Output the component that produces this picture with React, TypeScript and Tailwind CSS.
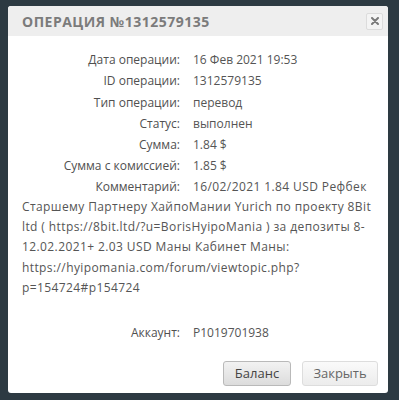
import React from "react";

const rows: [string, string][] = [
  ["Дата операции:", "16 Фев 2021 19:53"],
  ["ID операции:", "1312579135"],
  ["Тип операции:", "перевод"],
  ["Статус:", "выполнен"],
  ["Сумма:", "1.84 $"],
  ["Сумма с комиссией:", "1.85 $"],
];

function Row({
  label,
  children,
  valueClass = "",
  lh = "leading-[21.3px]",
}: {
  label: string;
  children: React.ReactNode;
  valueClass?: string;
  lh?: string;
}) {
  return (
    <div className={lh}>
      <span className="inline-block w-[158px] text-right mr-[13px] text-[#505050]">{label}</span>
      <span className={"text-[#555] " + valueClass}>{children}</span>
    </div>
  );
}

export default function App() {
  return (
    <div
      className="w-[399px] h-[400px] bg-[#2d3a42] pt-[6px] pl-[8px] overflow-hidden"
      style={{ fontFamily: '"Open Sans", "Noto Sans", sans-serif' }}
    >
      <div className="w-[380px] h-[387px] bg-white rounded-[3px] flex flex-col overflow-hidden">
        <div className="h-[30px] bg-[#eeeeee] flex items-center justify-between pl-[14px] pr-[5px]">
          <div className="text-[14px] font-bold tracking-[0.5px] text-[#7b7b7b]">ОПЕРАЦИЯ №1312579135</div>
          <div className="w-[17px] h-[17px] border border-[#dcdcdc] rounded-[2px] bg-[#f4f4f4] flex items-center justify-center">
            <svg width="8" height="8" viewBox="0 0 8 8">
              <path d="M1 1 L7 7 M7 1 L1 7" stroke="#7a7a7a" strokeWidth="2" strokeLinecap="round" />
            </svg>
          </div>
        </div>
        <div className="pl-[14px] pr-[10px] pt-[13px] text-[12px]">
          {rows.map(([l, v]) => (
            <Row key={l} label={l}>
              {v}
            </Row>
          ))}
          <Row label="Комментарий:" valueClass="tracking-[0.4px]" lh="leading-[20.2px]">
            16/02/2021 1.84 USD Рефбек Старшему Партнеру ХайпоМании Yurich по проекту 8Bit ltd ( https://8bit.ltd/?u=BorisHyipoMania ) за депозиты 8-12.02.2021+ 2.03 USD Маны Кабинет Маны: https://hyipomania.com/forum/viewtopic.php?p=154724#p154724
          </Row>
          <div className="mt-[24px]">
            <Row label="Аккаунт:">P1019701938</Row>
          </div>
        </div>
        <div className="flex justify-end gap-[11px] pr-[10px] mt-[18px]">
          <button className="w-[68px] h-[25px] rounded-[3px] border border-[#b9b9b9] bg-gradient-to-b from-[#f2f2f2] to-[#dcdcdc] text-[13px] text-[#444] flex items-center justify-center">
            Баланс
          </button>
          <button className="w-[76px] h-[25px] rounded-[3px] border border-[#dddddd] bg-gradient-to-b from-[#fafafa] to-[#ececec] text-[13px] text-[#666] flex items-center justify-center">
            Закрыть
          </button>
        </div>
      </div>
    </div>
  );
}
